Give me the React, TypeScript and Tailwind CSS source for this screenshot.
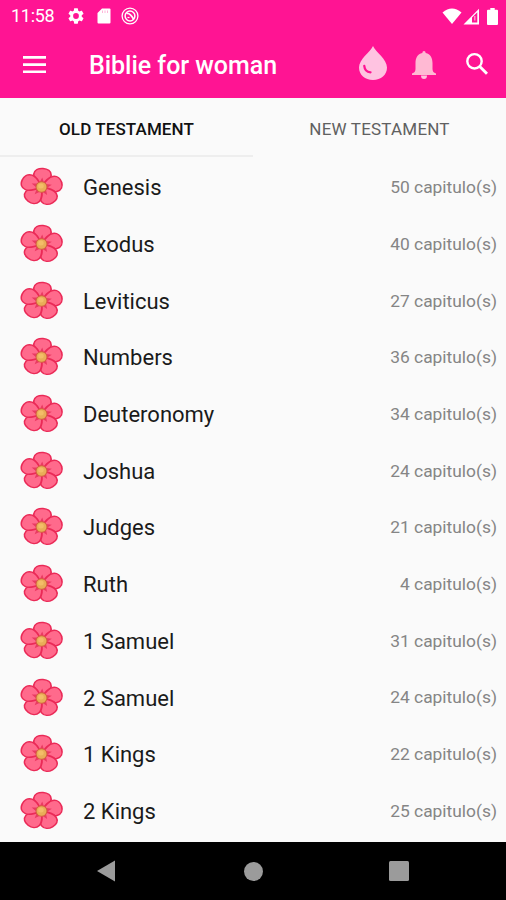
const books = [
    { id: 1, name: "Genesis", chapters: 50 },
    { id: 2, name: "Exodus", chapters: 40 },
    { id: 3, name: "Leviticus", chapters: 27 },
    { id: 4, name: "Numbers", chapters: 36 },
    { id: 5, name: "Deuteronomy", chapters: 34 },
    { id: 6, name: "Joshua", chapters: 24 },
    { id: 7, name: "Judges", chapters: 21 },
    { id: 8, name: "Ruth", chapters: 4 },
    { id: 9, name: "1 Samuel", chapters: 31 },
    { id: 10, name: "2 Samuel", chapters: 24 },
    { id: 11, name: "1 Kings", chapters: 22 },
    { id: 12, name: "2 Kings", chapters: 25 },
];

const petalAngles = [4, 76, 148, 220, 292];

function Flower() {
    return (
        <svg viewBox="0 0 44 40" className="h-10 w-11 shrink-0">
            <g transform="translate(21.5 20) scale(1.12 1)">
                {petalAngles.map((angle) => (
                    <g key={angle} transform={`rotate(${angle})`}>
                        <path
                            d="M0 0C-4-4-8-7.500-7.800-12.300C-7.600-16.500-4-18.600 0-18.600C4-18.600 7.600-16.500 7.800-12.300C8-7.500 4-4 0 0Z"
                            fill="#ff6a8c"
                            stroke="#ea2a57"
                            strokeWidth="1.500"
                        />
                        <path d="M-2.500-3L0-9.500L2.500-3Z" fill="#e93a62" />
                    </g>
                ))}
                <ellipse rx="4.900" ry="5.300" fill="#e9ad58" stroke="#d2603f" strokeWidth="0.900" />
                <circle cx="-0.500" cy="-1" r="2.500" fill="#f3bd68" />
            </g>
        </svg>
    );
}

function StatusBar() {
    return (
        <div className="flex h-8 items-center pl-[11px] pr-2 text-white">
            <span className="w-[57px] whitespace-nowrap text-[18px] leading-8 tracking-[-0.3px]">11:58</span>
            {/* Settings */}
            <svg viewBox="2 2 20 20" className="h-4 w-4" fill="currentColor">
                <path d="M19.140 12.940c.04-.3.060-.61.060-.94s-.02-.64-.07-.94l2.030-1.580a.49.490 0 0 0 .12-.61l-1.920-3.320a.49.490 0 0 0-.59-.22l-2.390.96c-.5-.38-1.030-.7-1.620-.94l-.36-2.540a.48.480 0 0 0-.48-.41h-3.840c-.24 0-.43.170-.47.410l-.36 2.540c-.59.240-1.130.570-1.620.940l-2.390-.96a.48.480 0 0 0-.59.220L2.740 8.870c-.12.210-.08.470.12.610l2.030 1.580c-.05.300-.09.630-.09.940s.02.640.070.940l-2.030 1.580a.49.490 0 0 0-.12.610l1.920 3.320c.12.220.370.290.590.220l2.390-.96c.5.380 1.030.700 1.620.940l.36 2.540c.05.240.240.410.480.410h3.840c.24 0 .44-.17.470-.41l.36-2.540c.59-.24 1.130-.56 1.620-.94l2.390.960c.22.080.470 0 .59-.22l1.920-3.320a.48.480 0 0 0-.12-.61l-2.010-1.580ZM12 15.600a3.600 3.600 0 1 1 0-7.200 3.600 3.600 0 0 1 0 7.200Z" />
            </svg>
            {/* SD card */}
            <svg viewBox="0 0 14 16" className="ml-[13px] h-4 w-3.5">
                <path d="M5 .5h7.500q1 0 1 1v13q0 1-1 1h-11q-1 0-1-1V5Z" fill="currentColor" />
                <path d="M5.500 2.500v2.500M8 2.500v2.500M10.500 2.500v2.500" stroke="#ffb5d9" strokeWidth="1" />
            </svg>
            <svg viewBox="0 0 18 18" className="ml-2.5 h-[18px] w-[18px]" fill="none" stroke="currentColor">
                <circle cx="9" cy="9" r="7.900" strokeWidth="1.300" />
                <circle cx="9" cy="9" r="4.900" strokeWidth="1.500" />
                <path d="M5.500 6.500Q9 5.500 12.800 12.500" strokeWidth="1.800" />
                <path d="M6.500 10.500H8.500" strokeWidth="1.200" />
            </svg>
            <div className="ml-auto flex items-center">
                <svg viewBox="0 0 20 17" className="h-[17px] w-5" fill="currentColor">
                    <path d="M.5 4.500Q10-3.500 19.500 4.500L10 16Z" />
                </svg>
                <svg viewBox="0 0 17 17" className="ml-px h-[17px] w-[17px]">
                    <path fillRule="evenodd" d="M.5 16.500L16 .8V16.500ZM9 9.500V14.500H14.300V4.300Z" fill="currentColor" />
                    <path d="M11.800 8V12.500" stroke="#ffa5d2" strokeWidth="1.300" />
                </svg>
                <svg viewBox="0 0 11 17" className="ml-[7px] h-[17px] w-[11px]" fill="currentColor">
                    <path d="M3.300 0h4.400v1.700H10q1 0 1 1V16q0 1-1 1H1q-1 0-1-1V2.700q0-1 1-1h2.300Z" />
                </svg>
            </div>
        </div>
    );
}

function AppBar() {
    return (
        <div className="flex h-[66px] items-center pl-[23px] pr-[17px] text-white">
            <svg viewBox="0 0 24 18" className="h-[18px] w-6" fill="currentColor">
                <path d="M0 0h23v2.700H0zM0 7.200h23v2.700H0zM0 14.400h23v2.700H0z" />
            </svg>
            <h1 className="ml-[42px] whitespace-nowrap pt-0.5 text-[25px] font-medium leading-8 tracking-[-0.03px]">Biblie for woman</h1>
            <div className="ml-auto flex items-center">
                <svg viewBox="0 0 28 34" className="h-[34px] w-7 -translate-x-px -translate-y-0.5">
                    <path d="M14 0C16.500 6 28 13 28 21.500C28 29 22 34 14 34S0 29 0 21.500C0 13 11.500 6 14 0Z" fill="#ffc3e1" />
                    <path d="M5.300 20Q5.800 26 11.500 26.300" fill="none" stroke="#ff1493" strokeWidth="2.300" strokeLinecap="round" />
                </svg>
                <svg viewBox="0 0 24 28" className="ml-6 h-7 w-6">
                    <path d="M12 0Q13.600 0 13.700 2C18.500 3 20.500 7 20.500 12V18Q20.500 21.500 24 22.500V24H0V22.500Q3.500 21.500 3.500 18V12C3.500 7 5.500 3 10.300 2Q10.400 0 12 0Z" fill="#ffb9d3" />
                    <path d="M9 24.500H15Q15 28 12 28T9 24.500Z" fill="#ffc3dd" />
                </svg>
                <svg viewBox="0 0 24 24" className="ml-[29px] h-6 w-6 -translate-y-px" fill="none" stroke="currentColor" strokeWidth="2.400">
                    <circle cx="9.500" cy="9.300" r="7.200" />
                    <path d="M14.700 14.500L22 21.800" strokeWidth="2.900" />
                </svg>
            </div>
        </div>
    );
}

function Tabs() {
    return (
        <div className="flex h-[61px] text-[17px] font-medium">
            <button className="mb-[2px] flex flex-1 items-center justify-center border-b-2 border-[#eeeeee] pt-1.5 tracking-[0.1px] text-[#111111]">
                OLD TESTAMENT
            </button>
            <button className="mb-[2px] flex flex-1 items-center justify-center border-b-2 border-transparent pt-1.5 font-normal tracking-[0.2px] text-[#606060]">
                NEW TESTAMENT
            </button>
        </div>
    );
}

function NavBar() {
    return (
        <nav className="flex h-[58px] items-center bg-black pl-[97px] text-[#9b9b9b]">
            <svg viewBox="0 0 18 22" className="h-[22px] w-[18px]" fill="currentColor">
                <path d="M18 0.500V21.500L0 11Z" />
            </svg>
            <div className="ml-[129px] h-[19px] w-[19px] rounded-full bg-[#9b9b9b]" />
            <div className="ml-[126px] h-5 w-5 rounded-[1.5px] bg-[#9b9b9b]" />
        </nav>
    );
}

export default function App() {
    return (
        <div className="flex h-[900px] w-[506px] flex-col overflow-hidden bg-[#fafafa] font-[Roboto,sans-serif]">
            <header className="h-[98px] shrink-0 bg-[#ff1493]">
                <StatusBar />
                <AppBar />
            </header>
            <Tabs />
            <ul className="flex-1">
                {books.map((book) => (
                    <li key={book.id} className="flex h-[56.7px] items-center pl-5 pr-[9px]">
                        <Flower />
                        <span className="ml-[19px] pt-0.5 text-[22px] leading-7 text-[#1a1a1a]">{book.name}</span>
                        <span className="ml-auto text-[17.4px] text-[#858585]">{book.chapters} capitulo(s)</span>
                    </li>
                ))}
            </ul>
            <NavBar />
        </div>
    );
}
